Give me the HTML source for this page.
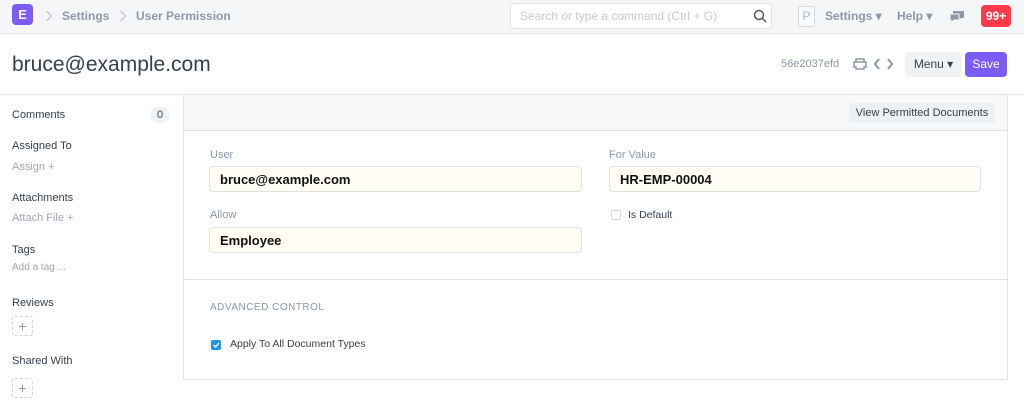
<!DOCTYPE html>
<html><head><meta charset="utf-8"><style>
*{box-sizing:border-box;margin:0;padding:0}
body{width:1024px;height:404px;overflow:hidden;background:#fff;font-family:"Liberation Sans",sans-serif;position:relative;color:#36414c}
.a{position:absolute;white-space:nowrap}
.nav{left:0;top:0;width:1024px;height:34px;background:#f5f6f8;border-bottom:1px solid #e4e8ec}
.bc{font-size:12px;font-weight:bold;color:#8d99a6}
.lbl{font-size:11px;color:#8d99a6}
.inp{height:26px;background:#fffdf4;border:1px solid #dfe3e7;border-radius:4px;font-size:13px;font-weight:bold;color:#111;padding:5px 10px}
.sh{font-size:11px;color:#36414c}
.sl{font-size:11px;color:#a0a8b0}
.dash{width:21px;height:20px;border:1px dashed #cfd5da;border-radius:3px;color:#8d99a6;font-size:14px;text-align:center;line-height:18px}
</style></head><body>
<div class="a nav"></div>
<div class="a" style="left:12px;top:4px;width:21px;height:21px;background:#7b5cf5;border-radius:4px;color:#fff;font-weight:bold;font-size:13px;text-align:center;line-height:21px">E</div>
<svg class="a" style="left:45px;top:10px" width="8" height="12" viewBox="0 0 8 12"><path d="M1.5 1l5 5-5 5" fill="none" stroke="#b8c0c8" stroke-width="1.2"/></svg>
<div class="a bc" style="left:62px;top:9px">Settings</div>
<svg class="a" style="left:119px;top:10px" width="8" height="12" viewBox="0 0 8 12"><path d="M1.5 1l5 5-5 5" fill="none" stroke="#b8c0c8" stroke-width="1.2"/></svg>
<div class="a bc" style="left:136px;top:9px">User Permission</div>
<div class="a" style="left:510px;top:3px;width:262px;height:26px;background:#fff;border:1px solid #dfe3e7;border-radius:4px"></div>
<div class="a" style="left:520px;top:9px;font-size:12px;color:#c5ccd3">Search or type a command (Ctrl + G)</div>
<svg class="a" style="left:753px;top:9px" width="14" height="14" viewBox="0 0 14 14"><circle cx="6" cy="6" r="4.5" fill="none" stroke="#555" stroke-width="1.4"/><path d="M9.3 9.3L13 13" stroke="#555" stroke-width="1.5"/></svg>
<div class="a" style="left:798px;top:6px;width:17px;height:21px;border:1px solid #d6dbe0;border-radius:3px;background:#fafbfc;color:#b0b8c0;font-size:12px;text-align:center;line-height:19px">P</div>
<div class="a bc" style="left:825px;top:9px">Settings &#x25BE;</div>
<div class="a bc" style="left:897px;top:9px">Help &#x25BE;</div>
<svg class="a" style="left:949px;top:10px" width="16" height="13" viewBox="0 0 16 13"><path d="M4 1h11v7h-3l-2 2V8H4z" fill="#8d99a6"/><path d="M1 4h9v6H5l-3 3v-3H1z" fill="#8d99a6" stroke="#f5f6f8" stroke-width="1"/></svg>
<div class="a" style="left:981px;top:5px;width:30px;height:22px;background:#ff3b4b;border-radius:4px;color:#fff;font-size:12px;font-weight:bold;text-align:center;line-height:22px">99+</div>

<div class="a" style="left:12px;top:53px;font-size:21px;color:#36414c">bruce@example.com</div>
<div class="a" style="left:781px;top:58px;font-size:11px;color:#8d99a6">56e2037efd</div>
<svg class="a" style="left:853px;top:58px" width="14" height="12" viewBox="0 0 14 12"><path d="M3 1h8v3H3zM1 4h12v5h-2v2H3V9H1z" fill="none" stroke="#8d99a6" stroke-width="1.5"/></svg>
<svg class="a" style="left:873px;top:58px" width="22" height="12" viewBox="0 0 22 12"><path d="M6 1L2 6l4 5M15 1l4 5-4 5" fill="none" stroke="#8d99a6" stroke-width="2"/></svg>
<div class="a" style="left:905px;top:52px;width:57px;height:25px;background:#f0f3f6;border-radius:4px;font-size:12px;color:#36414c;text-align:center;line-height:25px">Menu &#x25BE;</div>
<div class="a" style="left:965px;top:52px;width:42px;height:25px;background:#7b5cf5;border-radius:4px;font-size:12px;color:#fff;text-align:center;line-height:25px">Save</div>
<div class="a" style="left:0;top:94px;width:1024px;border-top:1px solid #e4e8ec"></div>

<div class="a sh" style="left:12px;top:109px">Comments</div>
<div class="a" style="left:150px;top:107px;width:20px;height:16px;background:#f0f3f6;border-radius:8px;font-size:11px;color:#36414c;text-align:center;line-height:16px">0</div>
<div class="a sh" style="left:12px;top:140px">Assigned To</div>
<div class="a sl" style="left:12px;top:161px">Assign +</div>
<div class="a sh" style="left:12px;top:192px">Attachments</div>
<div class="a sl" style="left:12px;top:212px">Attach File +</div>
<div class="a sh" style="left:12px;top:244px">Tags</div>
<div class="a sl" style="left:12px;top:262px;font-size:10px">Add a tag ...</div>
<div class="a sh" style="left:12px;top:297px">Reviews</div>
<div class="a dash" style="left:12px;top:316px">+</div>
<div class="a sh" style="left:12px;top:355px">Shared With</div>
<div class="a dash" style="left:12px;top:378px">+</div>

<div class="a" style="left:183px;top:95px;width:825px;height:285px;border:1px solid #e1e5e9;border-top:none"></div>
<div class="a" style="left:184px;top:95px;width:823px;height:36px;background:#f7f8fa;border-bottom:1px solid #dde3e8"></div>
<div class="a" style="left:849px;top:103px;width:146px;height:20px;background:#eef1f4;border-radius:3px;font-size:11px;color:#36414c;text-align:center;line-height:20px">View Permitted Documents</div>
<div class="a lbl" style="left:210px;top:149px">User</div>
<div class="a inp" style="left:209px;top:166px;width:373px">bruce@example.com</div>
<div class="a lbl" style="left:609px;top:149px">For Value</div>
<div class="a inp" style="left:609px;top:166px;width:372px">HR-EMP-00004</div>
<div class="a lbl" style="left:210px;top:209px">Allow</div>
<div class="a inp" style="left:209px;top:227px;width:373px">Employee</div>
<div class="a" style="left:611px;top:210px;width:10px;height:10px;border:1px solid #d0d6dc;border-radius:2px"></div>
<div class="a sh" style="left:628px;top:209px;font-size:10.5px">Is Default</div>
<div class="a" style="left:184px;top:279px;width:823px;border-top:1px solid #dde3e8"></div>
<div class="a" style="left:210px;top:302px;font-size:10px;color:#8d99a6;letter-spacing:0.5px">ADVANCED CONTROL</div>
<div class="a" style="left:211px;top:340px;width:10px;height:10px;background:#2490ef;border-radius:2px"></div>
<svg class="a" style="left:211px;top:340px" width="10" height="10" viewBox="0 0 10 10"><path d="M2.5 5l2 2 3.5-4" fill="none" stroke="#fff" stroke-width="1.4"/></svg>
<div class="a sh" style="left:230px;top:338px;font-size:10.5px">Apply To All Document Types</div>
</body></html>
